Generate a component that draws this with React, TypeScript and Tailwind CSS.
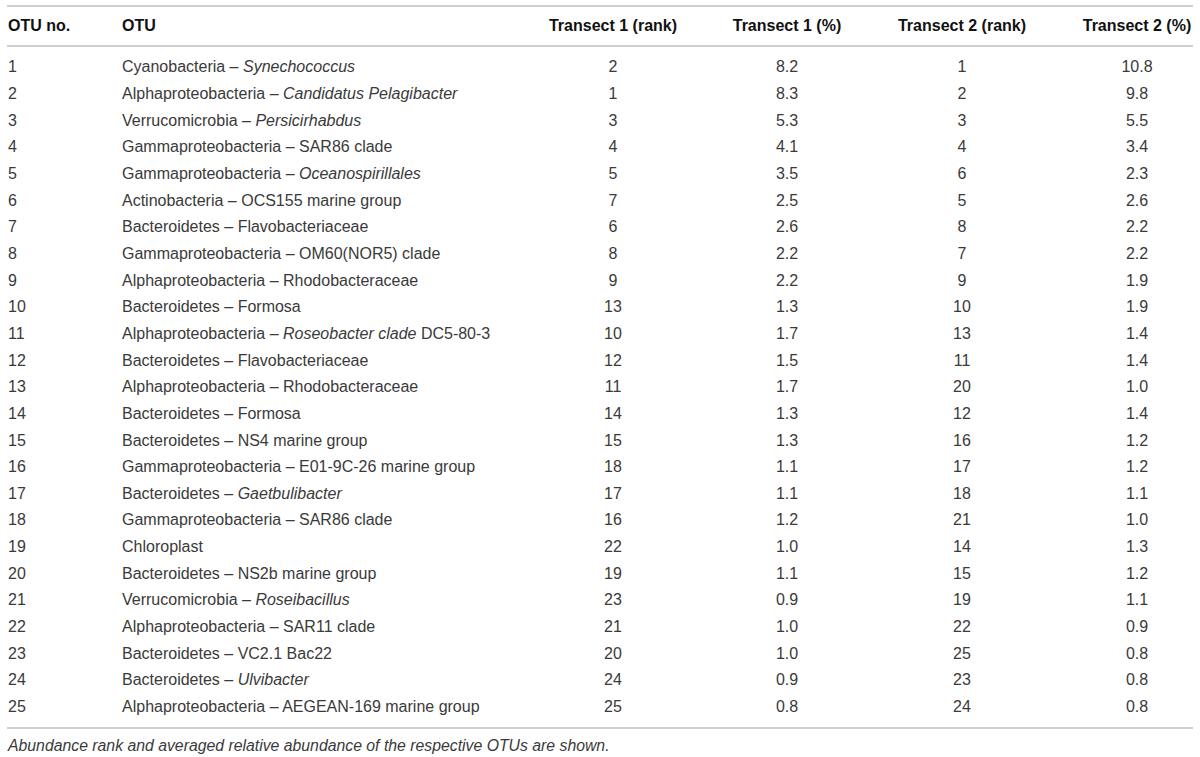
import React from 'react';

type Row = {
  no: number;
  group: string;
  genus?: string;
  genusItalic?: boolean;
  suffix?: string;
  r1: number;
  p1: string;
  r2: number;
  p2: string;
};

const rows: Row[] = [
  { no: 1, group: 'Cyanobacteria', genus: 'Synechococcus', genusItalic: true, r1: 2, p1: '8.2', r2: 1, p2: '10.8' },
  { no: 2, group: 'Alphaproteobacteria', genus: 'Candidatus Pelagibacter', genusItalic: true, r1: 1, p1: '8.3', r2: 2, p2: '9.8' },
  { no: 3, group: 'Verrucomicrobia', genus: 'Persicirhabdus', genusItalic: true, r1: 3, p1: '5.3', r2: 3, p2: '5.5' },
  { no: 4, group: 'Gammaproteobacteria', genus: 'SAR86 clade', r1: 4, p1: '4.1', r2: 4, p2: '3.4' },
  { no: 5, group: 'Gammaproteobacteria', genus: 'Oceanospirillales', genusItalic: true, r1: 5, p1: '3.5', r2: 6, p2: '2.3' },
  { no: 6, group: 'Actinobacteria', genus: 'OCS155 marine group', r1: 7, p1: '2.5', r2: 5, p2: '2.6' },
  { no: 7, group: 'Bacteroidetes', genus: 'Flavobacteriaceae', r1: 6, p1: '2.6', r2: 8, p2: '2.2' },
  { no: 8, group: 'Gammaproteobacteria', genus: 'OM60(NOR5) clade', r1: 8, p1: '2.2', r2: 7, p2: '2.2' },
  { no: 9, group: 'Alphaproteobacteria', genus: 'Rhodobacteraceae', r1: 9, p1: '2.2', r2: 9, p2: '1.9' },
  { no: 10, group: 'Bacteroidetes', genus: 'Formosa', r1: 13, p1: '1.3', r2: 10, p2: '1.9' },
  { no: 11, group: 'Alphaproteobacteria', genus: 'Roseobacter clade', genusItalic: true, suffix: ' DC5-80-3', r1: 10, p1: '1.7', r2: 13, p2: '1.4' },
  { no: 12, group: 'Bacteroidetes', genus: 'Flavobacteriaceae', r1: 12, p1: '1.5', r2: 11, p2: '1.4' },
  { no: 13, group: 'Alphaproteobacteria', genus: 'Rhodobacteraceae', r1: 11, p1: '1.7', r2: 20, p2: '1.0' },
  { no: 14, group: 'Bacteroidetes', genus: 'Formosa', r1: 14, p1: '1.3', r2: 12, p2: '1.4' },
  { no: 15, group: 'Bacteroidetes', genus: 'NS4 marine group', r1: 15, p1: '1.3', r2: 16, p2: '1.2' },
  { no: 16, group: 'Gammaproteobacteria', genus: 'E01-9C-26 marine group', r1: 18, p1: '1.1', r2: 17, p2: '1.2' },
  { no: 17, group: 'Bacteroidetes', genus: 'Gaetbulibacter', genusItalic: true, r1: 17, p1: '1.1', r2: 18, p2: '1.1' },
  { no: 18, group: 'Gammaproteobacteria', genus: 'SAR86 clade', r1: 16, p1: '1.2', r2: 21, p2: '1.0' },
  { no: 19, group: 'Chloroplast', r1: 22, p1: '1.0', r2: 14, p2: '1.3' },
  { no: 20, group: 'Bacteroidetes', genus: 'NS2b marine group', r1: 19, p1: '1.1', r2: 15, p2: '1.2' },
  { no: 21, group: 'Verrucomicrobia', genus: 'Roseibacillus', genusItalic: true, r1: 23, p1: '0.9', r2: 19, p2: '1.1' },
  { no: 22, group: 'Alphaproteobacteria', genus: 'SAR11 clade', r1: 21, p1: '1.0', r2: 22, p2: '0.9' },
  { no: 23, group: 'Bacteroidetes', genus: 'VC2.1 Bac22', r1: 20, p1: '1.0', r2: 25, p2: '0.8' },
  { no: 24, group: 'Bacteroidetes', genus: 'Ulvibacter', genusItalic: true, r1: 24, p1: '0.9', r2: 23, p2: '0.8' },
  { no: 25, group: 'Alphaproteobacteria', genus: 'AEGEAN-169 marine group', r1: 25, p1: '0.8', r2: 24, p2: '0.8' },
];

// column widths measured off the picture; last col padded so its centre lands right
const cols = 'grid grid-cols-[115px_404px_174px_174px_176px_1fr]';

export default function App() {
  return (
    <main
      className="w-[1200px] h-[757px] bg-white pl-[7px] pr-[7px] pt-[5px]"
      style={{ fontFamily: '"Liberation Sans", Arial, sans-serif' }}
    >
      <div className="border-t-2 border-b-2 border-[#cfcfcf]">
        <div className={`${cols} h-[38px] items-center text-[16px] font-bold text-[#111]`}>
          <div className="pl-[1px]">OTU no.</div>
          <div>OTU</div>
          <div className="text-center">Transect 1 (rank)</div>
          <div className="text-center">Transect 1 (%)</div>
          <div className="text-center">Transect 2 (rank)</div>
          <div className="pl-[31px] text-center">Transect 2 (%)</div>
        </div>
      </div>

      <div className="py-[7px] border-b-2 border-[#cfcfcf] text-[16px] text-[#3a3a3a]">
        {rows.map((r) => (
          <div key={r.no} className={`${cols} h-[26.67px] items-center`}>
            <div className="pl-[1px]">{r.no}</div>
            <div>
              {r.group}
              {r.genus && (
                <>
                  {' – '}
                  {r.genusItalic ? <i>{r.genus}</i> : r.genus}
                  {r.suffix}
                </>
              )}
            </div>
            <div className="text-center">{r.r1}</div>
            <div className="text-center">{r.p1}</div>
            <div className="text-center">{r.r2}</div>
            <div className="pl-[31px] text-center">{r.p2}</div>
          </div>
        ))}
      </div>

      <p className="pl-[1px] pt-[5px] text-[15.8px] italic text-[#3a3a3a]">
        Abundance rank and averaged relative abundance of the respective OTUs are shown.
      </p>
    </main>
  );
}
